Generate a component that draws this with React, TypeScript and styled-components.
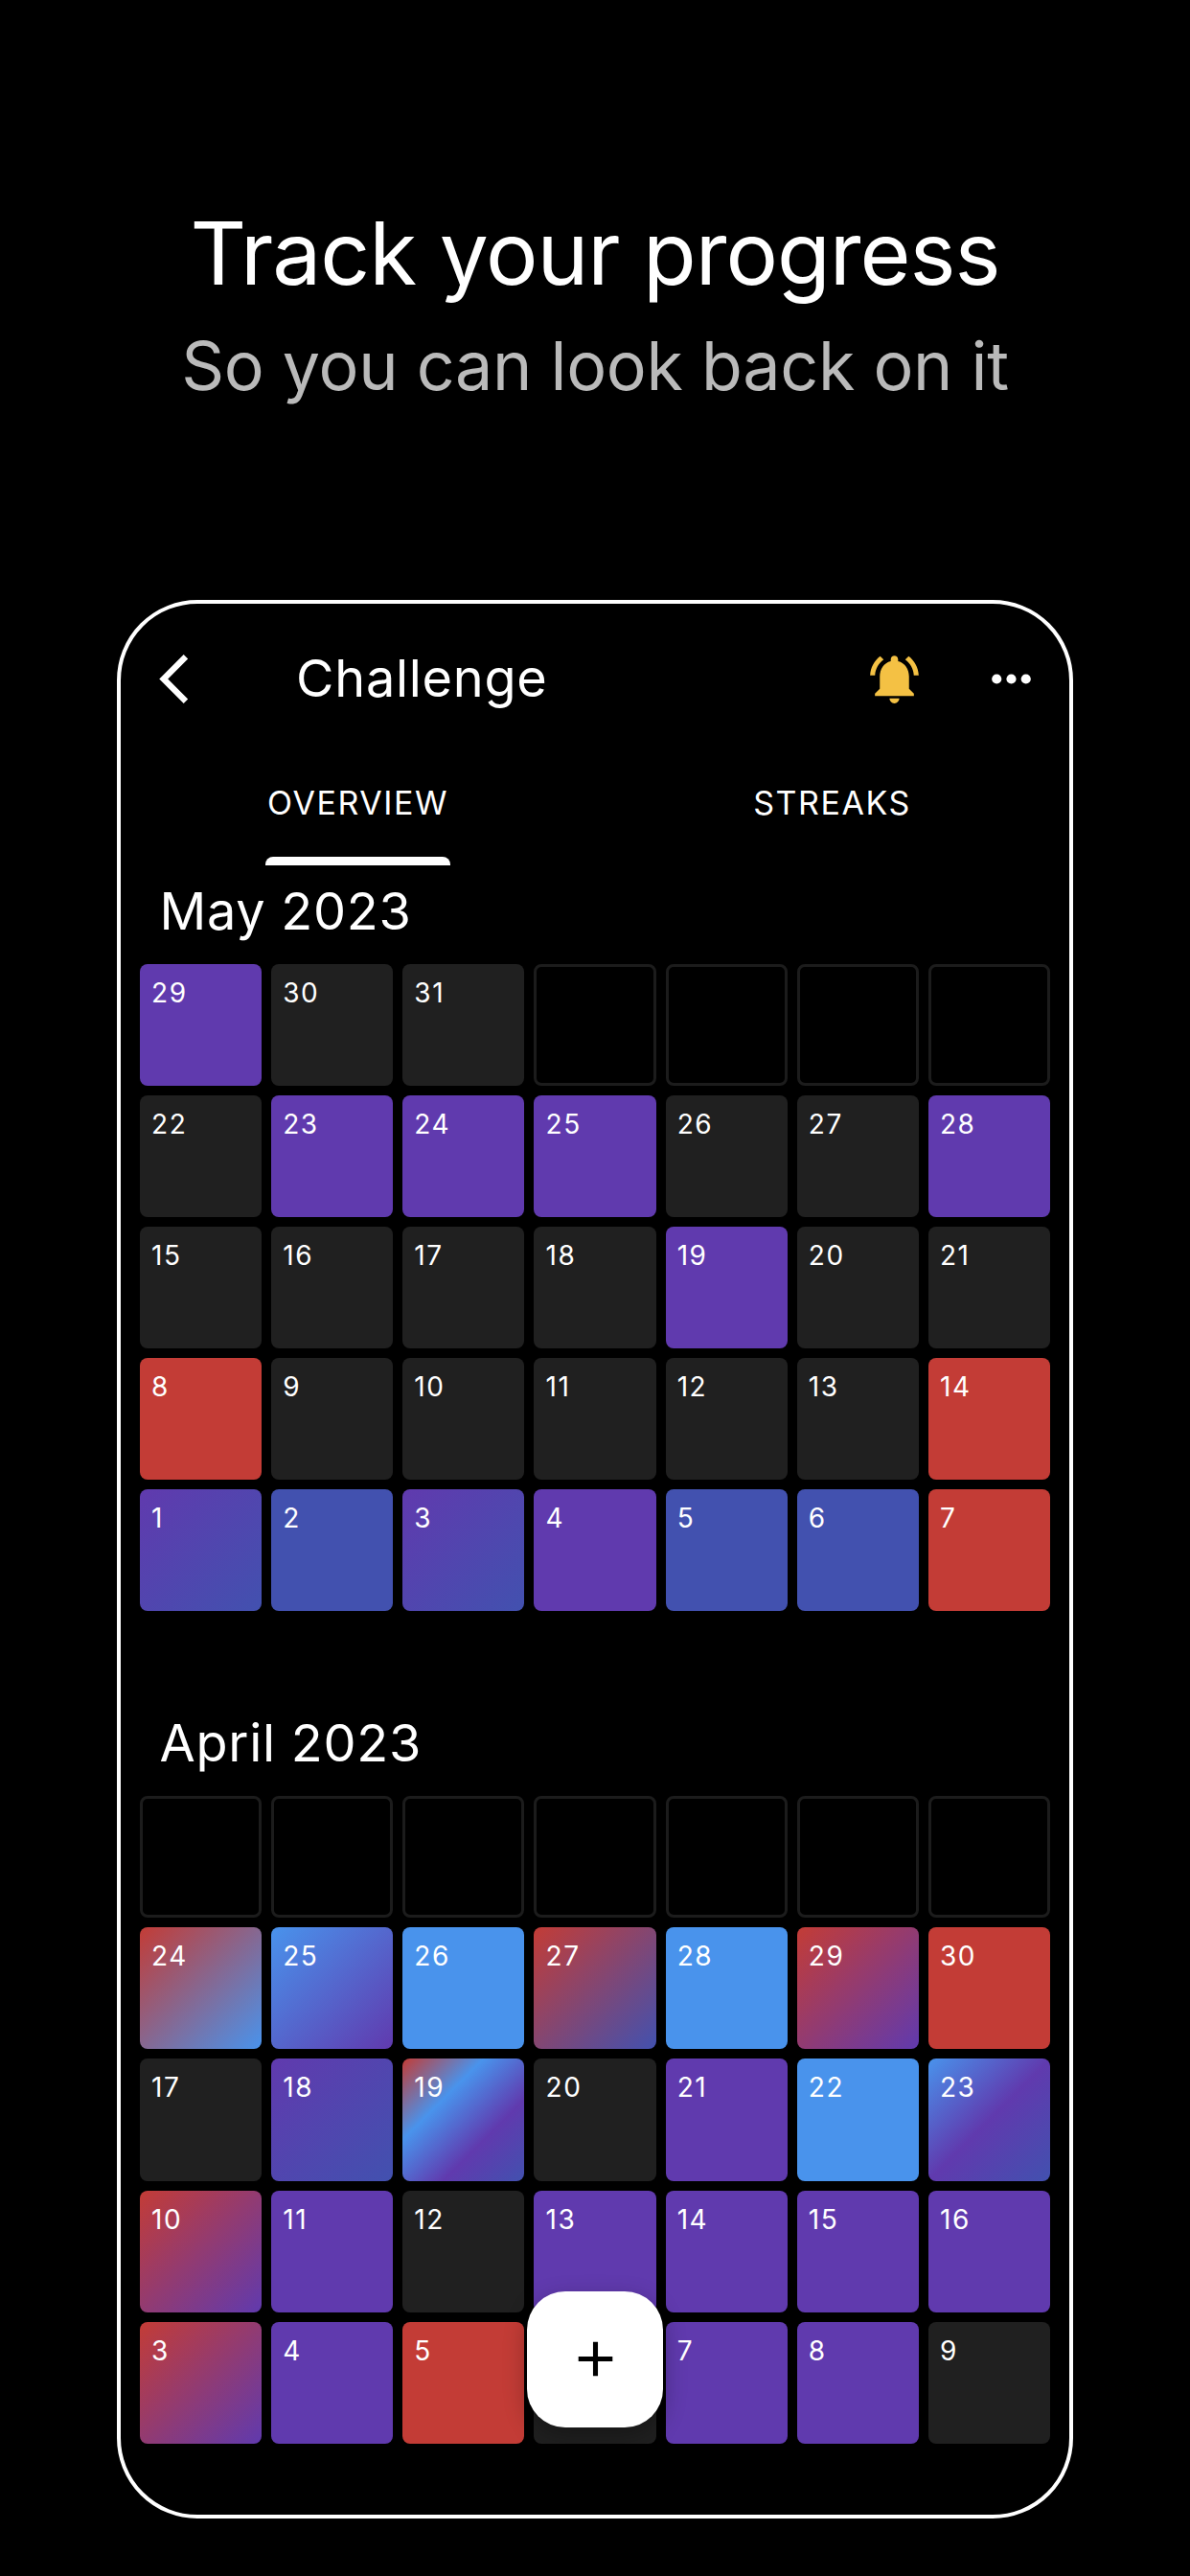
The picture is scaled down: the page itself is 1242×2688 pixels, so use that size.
import * as React from 'react'
import { Fragment, FC } from 'react'
import styled, { createGlobalStyle, css } from 'styled-components'

const colors = {
  red: '#c33c36',
  blue: '#4993ec',
  purple: '#603aae',
  indigo: '#4251af',
  empty: '#202020',
  outline: '#1c1c1c',
  bell: '#f4c144',
}

type Mark = 'red' | 'blue' | 'purple' | 'indigo'

interface DayData {
  day?: number
  marks?: Mark[]
}

const day = (n: number, ...marks: Mark[]): DayData => ({ day: n, marks })
const blank = (count: number): DayData[] => Array.from({ length: count }, () => ({}))

const months = [
  {
    title: 'May 2023',
    days: [
      day(29, 'purple'), day(30), day(31), ...blank(4),
      day(22), day(23, 'purple'), day(24, 'purple'), day(25, 'purple'), day(26), day(27), day(28, 'purple'),
      day(15), day(16), day(17), day(18), day(19, 'purple'), day(20), day(21),
      day(8, 'red'), day(9), day(10), day(11), day(12), day(13), day(14, 'red'),
      day(1, 'purple', 'indigo'), day(2, 'indigo'), day(3, 'purple', 'indigo'), day(4, 'purple'),
      day(5, 'indigo'), day(6, 'indigo'), day(7, 'red'),
    ],
  },
  {
    title: 'April 2023',
    days: [
      ...blank(7),
      day(24, 'red', 'blue'), day(25, 'blue', 'purple'), day(26, 'blue'), day(27, 'red', 'indigo'),
      day(28, 'blue'), day(29, 'red', 'purple'), day(30, 'red'),
      day(17), day(18, 'purple', 'indigo'), day(19, 'red', 'blue', 'purple', 'indigo'), day(20),
      day(21, 'purple'), day(22, 'blue'), day(23, 'blue', 'purple', 'indigo'),
      day(10, 'red', 'purple'), day(11, 'purple'), day(12), day(13, 'purple'),
      day(14, 'purple'), day(15, 'purple'), day(16, 'purple'),
      day(3, 'red', 'purple'), day(4, 'purple'), day(5, 'red'), day(6),
      day(7, 'purple'), day(8, 'purple'), day(9),
    ],
  },
]

const background = (marks: Mark[] = []) => {
  if (!marks.length) return colors.empty
  if (marks.length === 1) return colors[marks[0]]
  return `linear-gradient(135deg, ${marks.map(m => colors[m]).join(', ')})`
}

const Global = createGlobalStyle`
  * {
    box-sizing: border-box;
  }

  body {
    margin: 0;
    background: #000;
    color: #fff;
    font-family: Inter, 'Liberation Sans', sans-serif;
    -webkit-font-smoothing: antialiased;
  }
`

const Page = styled.div`
  display: flex;
  flex-direction: column;
  align-items: center;
  width: 1242px;
  height: 2688px;
  overflow: hidden;
  background: #000;
`

const Headline = styled.header`
  display: flex;
  flex-direction: column;
  align-items: center;
  height: 626px;
  padding-top: 209px;
  white-space: nowrap;
`

const Title = styled.h1`
  margin: 0;
  font-size: 91px;
  line-height: 110px;
  font-weight: 400;
  letter-spacing: -1.05px;
`

const Subtitle = styled.p`
  margin: 18px 0 0;
  font-size: 70px;
  line-height: 90px;
  font-weight: 400;
  letter-spacing: -0.3px;
  color: #bababa;
`

const Phone = styled.main`
  position: relative;
  display: flex;
  flex-direction: column;
  width: 998px;
  height: 2001.6px;
  border: 4px solid #fff;
  border-radius: 84px;
`

const Toolbar = styled.div`
  display: flex;
  align-items: center;
  height: 156px;
  padding: 0 30px 0 25px;
`

const IconButton = styled.button`
  display: flex;
  padding: 0;
  border: 0;
  background: none;
  color: inherit;

  & + & {
    margin-left: 61px;
  }
`

const Icon = styled.svg`
  display: block;
  width: 61px;
  height: 61px;
  fill: currentColor;
`

const Name = styled.h2`
  flex: 1;
  margin: 0 0 0 97px;
  font-size: 54px;
  line-height: 66px;
  font-weight: 400;
  letter-spacing: 0.75px;
`

const Tabs = styled.nav`
  display: grid;
  grid-template-columns: 1fr 1fr;
  height: 116.5px;
`

const Tab = styled.a<{ $active?: boolean }>`
  display: flex;
  flex-direction: column;
  align-items: center;
  justify-content: space-between;
  padding-top: 31px;
  font-size: 34px;
  line-height: 42px;
  font-weight: 400;
  letter-spacing: 1.55px;

  ${p =>
    p.$active &&
    css`
      &::after {
        content: '';
        width: 193px;
        height: 8.5px;
        border-radius: 8px 8px 0 0;
        background: #fff;
      }
    `}
`

const Month = styled.section`
  padding: 0 20px;

  & + & {
    margin-top: 89.4px;
  }
`

const MonthTitle = styled.h3`
  height: 103.2px;
  margin: 0;
  padding: 15px 0 0 20.5px;
  font-size: 54px;
  line-height: 66px;
  font-weight: 400;
  letter-spacing: 0.75px;
`

const Days = styled.div`
  display: grid;
  grid-template-columns: repeat(7, 1fr);
  gap: 10px;
`

const Day = styled.div<{ $data: DayData }>`
  aspect-ratio: 1;
  padding: 13px 12px;
  border-radius: 8px;
  font-size: 28px;
  line-height: 34px;
  letter-spacing: 1.6px;

  ${p =>
    p.$data.day
      ? css`
          background: ${background(p.$data.marks)};
        `
      : css`
          border: 3px solid ${colors.outline};
        `}
`

const AddButton = styled.button`
  position: absolute;
  left: 424px;
  bottom: 91px;
  display: flex;
  align-items: center;
  justify-content: center;
  width: 142px;
  height: 142px;
  padding: 0;
  border: 0;
  border-radius: 40px;
  background: #fff;
  color: #000;
  box-shadow: 0 8px 24px rgba(0, 0, 0, 0.3);
`

const App: FC = () => (
  <Fragment>
    <Global />
    <Page>
      <Headline>
        <Title>Track your progress</Title>
        <Subtitle>So you can look back on it</Subtitle>
      </Headline>
      <Phone>
        <Toolbar>
          <IconButton aria-label="Back">
            <Icon viewBox="0 0 24 24">
              <path d="M17.77 3.77 16 2 6 12l10 10 1.77-1.77L9.54 12z" />
            </Icon>
          </IconButton>
          <Name>Challenge</Name>
          <IconButton aria-label="Reminders">
            <Icon viewBox="0 0 24 24" color={colors.bell}>
              <path d="M7.58 4.08 6.15 2.65C3.75 4.48 2.17 7.3 2.03 10.5h2c.15-2.65 1.51-4.97 3.55-6.42zm12.39 6.42h2c-.15-3.2-1.73-6.02-4.12-7.85l-1.42 1.43c2.02 1.45 3.39 3.77 3.54 6.42zM18 11c0-3.07-1.64-5.64-4.5-6.32V4c0-.83-.67-1.5-1.5-1.5s-1.5.67-1.5 1.5v.68C7.63 5.36 6 7.92 6 11v5l-2 2v1h16v-1l-2-2v-5zm-6 11c1.1 0 2-.9 2-2h-4c0 1.1.9 2 2 2z" />
            </Icon>
          </IconButton>
          <IconButton aria-label="More">
            <Icon viewBox="0 0 24 24">
              <circle cx="6" cy="12" r="2" />
              <circle cx="12" cy="12" r="2" />
              <circle cx="18" cy="12" r="2" />
            </Icon>
          </IconButton>
        </Toolbar>
        <Tabs>
          <Tab $active>OVERVIEW</Tab>
          <Tab>STREAKS</Tab>
        </Tabs>
        {months.map(month => (
          <Month key={month.title}>
            <MonthTitle>{month.title}</MonthTitle>
            <Days>
              {month.days.map((data, i) => (
                <Day key={i} $data={data}>
                  {data.day}
                </Day>
              ))}
            </Days>
          </Month>
        ))}
        <AddButton aria-label="Add">
          <Icon viewBox="0 0 24 24">
            <path d="M19 13h-6v6h-2v-6H5v-2h6V5h2v6h6z" />
          </Icon>
        </AddButton>
      </Phone>
    </Page>
  </Fragment>
)

export default App
